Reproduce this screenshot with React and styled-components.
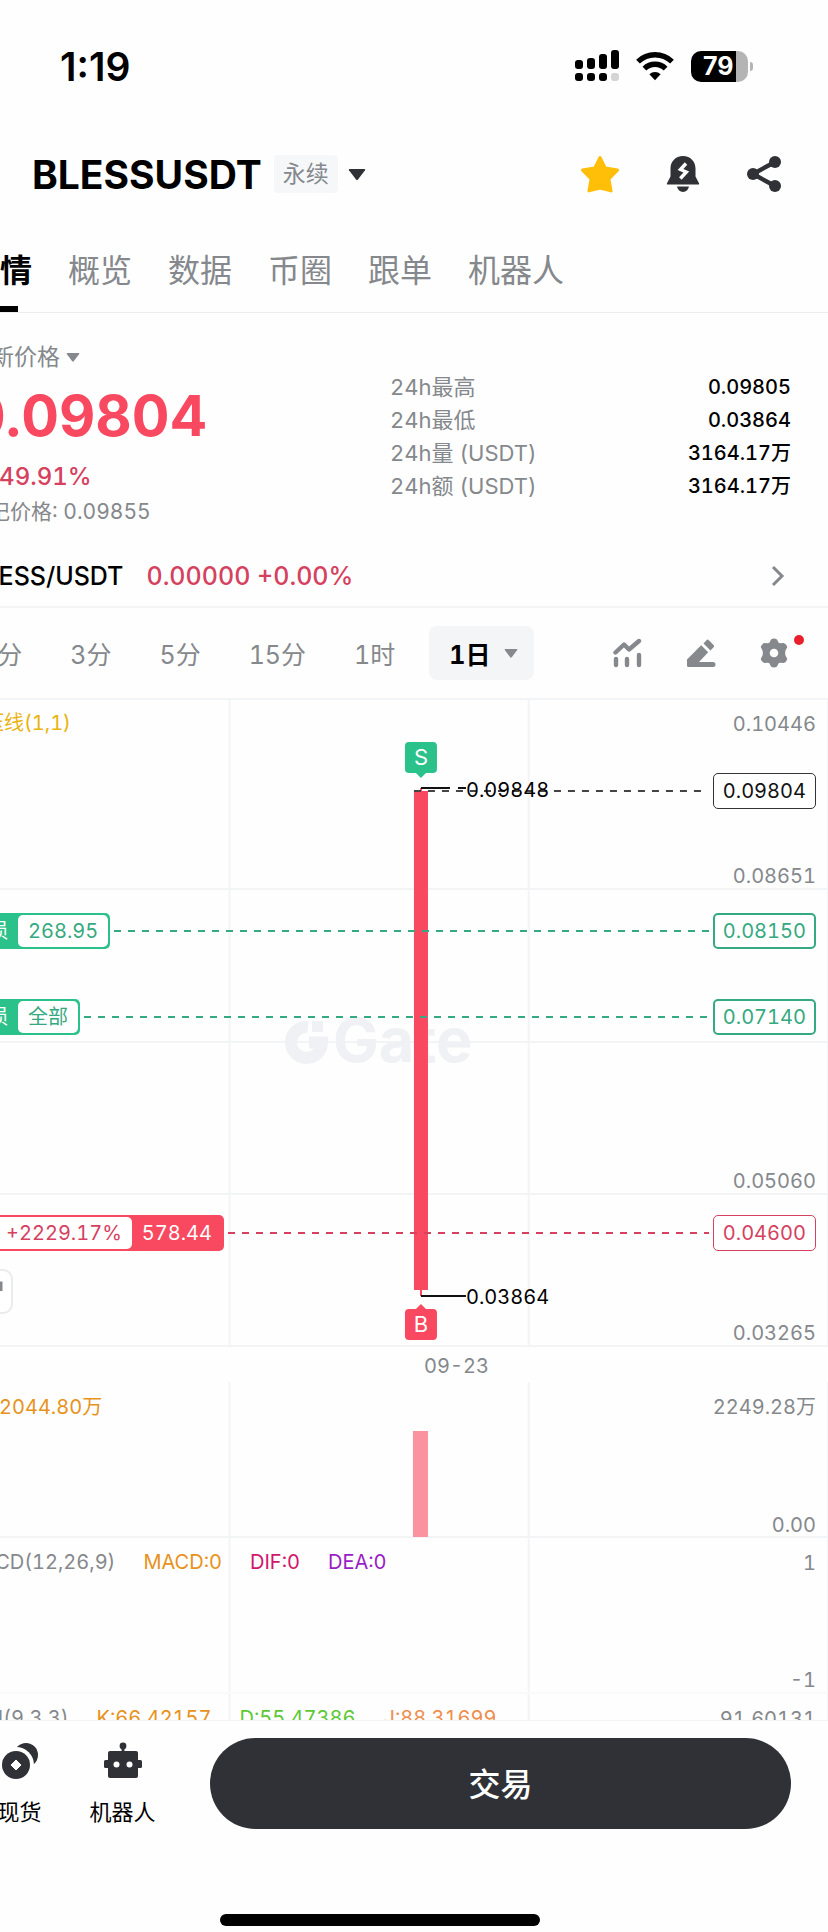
import { useState } from "react"
import styled, { createGlobalStyle } from "styled-components"

const UP = "#f84960"
const DOWN = "#2ac28a"
const DOWN_LINE = "#35a981"
const UP_LINE = "#d5415f"
const INK = "#303136"
const MUTED = "#85888c"
const LINE = "#f3f4f5"

const tabs = ["行情", "概览", "数据", "币圈", "跟单", "机器人"]

const stats = [
  { label: "24h最高", value: "0.09805" },
  { label: "24h最低", value: "0.03864" },
  { label: "24h量 (USDT)", value: "3164.17万" },
  { label: "24h额 (USDT)", value: "3164.17万" },
]

const intervals = ["1分", "3分", "5分", "15分", "1时"]

// Y positions are measured from the top of the pane.
const priceTicks = [
  { y: 26, text: "0.10446" },
  { y: 178, text: "0.08651" },
  { y: 483, text: "0.05060" },
  { y: 635, text: "0.03265" },
]

const macdLegend = [
  { text: "MACD(12,26,9)", color: MUTED },
  { text: "MACD:0", color: "#e8921c" },
  { text: "DIF:0", color: "#d2156c" },
  { text: "DEA:0", color: "#9a1cc6" },
]

const kdjLegend = [
  { text: "KDJ(9,3,3)", color: MUTED },
  { text: "K:66.42157", color: "#e8921c" },
  { text: "D:55.47386", color: "#5bc934" },
  { text: "J:88.31699", color: "#ee8e4e" },
]

function SignalIcon() {
  return (
    <svg width="44" height="32" viewBox="0 0 44 32" aria-hidden="true">
      <rect x="0" y="10" width="8" height="9" rx="3" />
      <rect x="12" y="8" width="8" height="11" rx="3" />
      <rect x="24" y="4" width="8" height="15" rx="3" />
      <rect x="36" y="0" width="8" height="19" rx="3" />
      <rect x="0" y="23" width="8" height="8" rx="3" />
      <rect x="12" y="23" width="8" height="8" rx="3" />
      <rect x="24" y="23" width="8" height="8" rx="3" />
      <rect x="36" y="23" width="8" height="8" rx="3" fill="#d4d4d4" />
    </svg>
  )
}

function WifiIcon() {
  return (
    <svg width="38" height="30" viewBox="0 0 38 30" fill="none" stroke="#000" strokeWidth="5.4" aria-hidden="true">
      <path d="M2 10.6a24.5 24.5 0 0 1 34 0" />
      <path d="M8.4 17.6a15.2 15.2 0 0 1 21.2 0" />
      <path d="M19 29.2l-5.6-6a8 8 0 0 1 11.2 0z" fill="#000" stroke="none" />
    </svg>
  )
}

function StarIcon() {
  return (
    <svg width="40" height="38" viewBox="0 0 40 38" aria-hidden="true">
      <path
        d="M20 2.500l5.300 10.600 12.200 2-8.600 8.800 2.200 12L20 33l-11.100 2.900 2.200-12-8.600-8.800 12.200-2z"
        fill="#ffbe08"
        stroke="#ffbe08"
        strokeWidth="3"
        strokeLinejoin="round"
      />
    </svg>
  )
}

function BellIcon() {
  return (
    <svg width="34" height="38" viewBox="0 0 34 38" fill={INK} aria-hidden="true">
      <path d="M17 1C9.600 1 4.500 6.500 4.500 13.500v8L1 28.200c-.4.8 0 1.300.8 1.300h30.400c.8 0 1.200-.5.8-1.300l-3.500-6.700v-8C29.500 6.500 24.400 1 17 1z" />
      <path d="M11 31.500h12c-.7 3.400-3 5.500-6 5.500s-5.300-2.100-6-5.500z" />
      <path d="M20 8.500l-5.500 6 5.800 2.500-6 6.500" fill="none" stroke="#fff" strokeWidth="3.400" />
    </svg>
  )
}

function ShareIcon() {
  return (
    <svg width="36" height="38" viewBox="0 0 36 38" fill={INK} aria-hidden="true">
      <path d="M29 7L7 19l22 12" fill="none" stroke={INK} strokeWidth="4.400" />
      <circle cx="29" cy="7" r="6" />
      <circle cx="7" cy="19" r="6" />
      <circle cx="29" cy="31" r="6" />
    </svg>
  )
}

function IndicatorIcon() {
  return (
    <svg width="30" height="30" viewBox="0 0 30 30" fill="none" stroke={MUTED} strokeWidth="4.400" strokeLinecap="round" strokeLinejoin="round" aria-hidden="true">
      <path d="M3.500 14.500L12 6.500l5 5L27 3" />
      <path d="M4 21v6M15 21v6M27 17v10" />
    </svg>
  )
}

function PenIcon() {
  return (
    <svg width="30" height="30" viewBox="0 0 30 30" fill={MUTED} aria-hidden="true">
      <path d="M15.200 7.200l7 7L13 24h14a2.200 2.200 0 0 1 0 5H2.500A1.500 1.500 0 0 1 1 27.500V21.500z" />
      <path d="M20.500 2.200a1.600 1.600 0 0 1 2.300 0l4.800 4.800a1.600 1.600 0 0 1 0 2.300l-3.100 3.100-7-7z" />
    </svg>
  )
}

function GearIcon() {
  return (
    <svg width="28" height="30" viewBox="0 0 28 30" aria-hidden="true">
      <path
        fillRule="evenodd"
        fill={MUTED}
        d="M11 1.500q3-2 6 0l1.500 3q.8 1 2 .8l3.200-.2q2.800.8 3.600 3.900L25.500 12.500q-.7 2.500 0 5l1.800 3.500q-.8 3.100-3.600 3.900l-3.200-.2q-1.200-.2-2 .8l-1.500 3q-3 2-6 0l-1.500-3q-.8-1-2-.8l-3.200.2Q1.500 24.100.7 21l1.800-3.500q.7-2.500 0-5L.7 9q.8-3.100 3.600-3.900l3.200.2q1.200.2 2-.8zM14 10.700a4.300 4.300 0 1 0 0 8.600 4.300 4.300 0 0 0 0-8.600z"
      />
    </svg>
  )
}

function CoinsIcon() {
  return (
    <svg width="38" height="38" viewBox="0 0 38 38" aria-hidden="true">
      <circle cx="25" cy="13" r="12" fill={INK} />
      <circle cx="15" cy="23" r="18" fill="#fff" />
      <circle cx="15" cy="23" r="14" fill={INK} />
      <path d="M15 18l5 5-5 5-5-5z" fill="#fff" stroke="#fff" strokeLinejoin="round" />
    </svg>
  )
}

function RobotIcon() {
  return (
    <svg width="38" height="38" viewBox="0 0 38 38" fill={INK} aria-hidden="true">
      <circle cx="19" cy="4" r="3.400" />
      <path d="M17.600 4h2.800v6h-2.800z" />
      <rect x="4" y="9" width="30" height="27" rx="2" />
      <rect x="0" y="18" width="38" height="8" rx="1.500" />
      <circle cx="12.500" cy="22.500" r="3" fill="#fff" />
      <circle cx="25.500" cy="22.500" r="3" fill="#fff" />
    </svg>
  )
}

function Caret({ size, color }) {
  return (
    <svg width={size} height={size} viewBox="0 0 18 18" aria-hidden="true">
      <path d="M1.500 4h15q1 .5.500 1.300L10 14.500q-1 1-2 0L1 5.300Q.6 4.500 1.500 4z" fill={color} />
    </svg>
  )
}

function VerticalGrid() {
  return (
    <g stroke={LINE} strokeWidth="2">
      <line x1="30.4%" x2="30.4%" y1="0" y2="100%" />
      <line x1="65.2%" x2="65.2%" y1="0" y2="100%" />
      <line x1="100%" x2="100%" y1="0" y2="100%" />
    </g>
  )
}

function PriceChart() {
  return (
    <Pane $height={649}>
      <Plot>
        <VerticalGrid />
        <g stroke={LINE} strokeWidth="2">
          <line x1="0" x2="100%" y1="1" y2="1" />
          <line x1="0" x2="100%" y1="191" y2="191" />
          <line x1="0" x2="100%" y1="344" y2="344" />
          <line x1="0" x2="100%" y1="496" y2="496" />
          <line x1="0" x2="100%" y1="648" y2="648" />
        </g>
        <svg x="52.67%" overflow="visible">
          <path d="M-113 329a15.500 15.500 0 1 0 14 15.500h-13" fill="none" stroke="#f0f1f4" strokeWidth="12" />
          <path d="M-109 323h11v11h-11z" fill="#f0f1f4" />
          <text x="-88" y="364" fontSize="61" fontWeight="700" fill="#f0f1f4">Gate</text>
          <rect x="-7" y="93" width="14" height="499" fill={UP} />
          <path d="M0 90v4M0 591v7" stroke={UP} strokeWidth="2" />
          <path d="M0 90h29M37 90h8" stroke="#111" strokeWidth="2" />
          <path d="M0 598h45" stroke="#111" strokeWidth="2" />
          <path d="M-7 93h294" stroke="#444" strokeWidth="2" strokeDasharray="7 7" />
          <text x="45" y="99" fontSize="20" fill="#000">0.09848</text>
          <text x="45" y="606" fontSize="20" fill="#000">0.03864</text>
          <path d="M-12 44h24q4 0 4 4v23q0 4-4 4H5l-5 5-5-5h-7q-4 0-4-4V48q0-4 4-4z" fill={DOWN} />
          <text x="0" y="67" fontSize="22" textAnchor="middle" fill="#fff">S</text>
          <path d="M-12 611h7l5-5 5 5h7q4 0 4 4v23q0 4-4 4h-24q-4 0-4-4v-23q0-4 4-4z" fill={UP} />
          <text x="0" y="634" fontSize="22" textAnchor="middle" fill="#fff">B</text>
        </svg>
      </Plot>
      <Legend $y={25}>
        <LegendItem $color="#eab30f">支压线(1,1)</LegendItem>
      </Legend>
      {priceTicks.map(tick => (
        <Tick key={tick.text} $y={tick.y}>{tick.text}</Tick>
      ))}
      <Level $y={93}>
        <PriceTag $color="#333" $text="#111" $thin>0.09804</PriceTag>
      </Level>
      <Level $y={233}>
        <OrderTag $fill={DOWN}>
          <OrderName>止损</OrderName>
          <OrderAmount $color={DOWN_LINE}>268.95</OrderAmount>
        </OrderTag>
        <Dash $color={DOWN_LINE} />
        <PriceTag $color={DOWN_LINE}>0.08150</PriceTag>
      </Level>
      <Level $y={319}>
        <OrderTag $fill={DOWN}>
          <OrderName>止损</OrderName>
          <OrderAmount $color={DOWN_LINE}>全部</OrderAmount>
        </OrderTag>
        <Dash $color={DOWN_LINE} />
        <PriceTag $color={DOWN_LINE}>0.07140</PriceTag>
      </Level>
      <Level $y={535}>
        <OrderTag $fill={UP}>
          <Profit>+2229.17%</Profit>
          <OrderName>578.44</OrderName>
        </OrderTag>
        <Dash $color={UP_LINE} />
        <PriceTag $color={UP_LINE} $thin>0.04600</PriceTag>
      </Level>
      <ExpandButton type="button" aria-label="全屏">
        <svg width="24" height="24" viewBox="0 0 24 24" fill="none" stroke={MUTED} strokeWidth="3" aria-hidden="true">
          <path d="M14 3h8v8M10 21H2v-8" />
        </svg>
      </ExpandButton>
    </Pane>
  )
}

function App() {
  const [activeTab, setActiveTab] = useState(tabs[0])
  const [favorite, setFavorite] = useState(true)

  return (
    <>
      <GlobalStyle />
      <Page>
        <StatusBar>
          <Clock>1:19</Clock>
          <StatusIcons>
            <SignalIcon />
            <WifiIcon />
            <Battery>79</Battery>
          </StatusIcons>
        </StatusBar>
        <Header>
          <Title>BLESSUSDT</Title>
          <Badge>永续</Badge>
          <IconButton type="button" aria-label="切换合约">
            <Caret size={18} color={INK} />
          </IconButton>
          <HeaderActions>
            <IconButton type="button" aria-label="收藏" aria-pressed={favorite} onClick={() => setFavorite(!favorite)}>
              <StarIcon />
            </IconButton>
            <IconButton type="button" aria-label="提醒">
              <BellIcon />
            </IconButton>
            <IconButton type="button" aria-label="分享">
              <ShareIcon />
            </IconButton>
          </HeaderActions>
        </Header>
        <Content>
          <Tabs>
            {tabs.map(tab => (
              <Tab key={tab} type="button" $active={tab === activeTab} onClick={() => setActiveTab(tab)}>
                {tab}
              </Tab>
            ))}
          </Tabs>
          <Summary>
            <div>
              <PriceLabel type="button">
                最新价格
                <Caret size={14} color={MUTED} />
              </PriceLabel>
              <Price>0.09804</Price>
              <Change>+149.91%</Change>
              <MarkPrice>标记价格: 0.09855</MarkPrice>
            </div>
            <Stats>
              {stats.map(stat => (
                <Stat key={stat.label}>
                  <dt>{stat.label}</dt>
                  <dd>{stat.value}</dd>
                </Stat>
              ))}
            </Stats>
          </Summary>
          <SpotLink href="#spot">
            <span>BLESS/USDT</span>
            <SpotPrice>0.00000 +0.00%</SpotPrice>
            <svg width="14" height="22" viewBox="0 0 14 22" fill="none" stroke={MUTED} strokeWidth="3" aria-hidden="true">
              <path d="M2 2l9 9-9 9" />
            </svg>
          </SpotLink>
          <Toolbar>
            <Intervals>
              {intervals.map(interval => (
                <Interval key={interval} type="button">{interval}</Interval>
              ))}
            </Intervals>
            <ActiveInterval type="button">
              1日
              <Caret size={14} color={MUTED} />
            </ActiveInterval>
            <Tools>
              <IconButton type="button" aria-label="指标">
                <IndicatorIcon />
              </IconButton>
              <IconButton type="button" aria-label="画线">
                <PenIcon />
              </IconButton>
              <IconButton type="button" aria-label="设置">
                <GearIcon />
                <Dot />
              </IconButton>
            </Tools>
          </Toolbar>
          <PriceChart />
          <DateAxis>09-23</DateAxis>
          <Pane $height={156}>
            <Plot>
              <VerticalGrid />
              <line x1="0" x2="100%" y1="155" y2="155" stroke={LINE} strokeWidth="2" />
              <svg x="52.67%" overflow="visible">
                <rect x="-8" y="49" width="15" height="106" fill="#fb929f" />
              </svg>
            </Plot>
            <Legend $y={25}>
              <LegendItem $color="#e8921c">Vol:2044.80万</LegendItem>
            </Legend>
            <Tick $y={25}>2249.28万</Tick>
            <Tick $y={143}>0.00</Tick>
          </Pane>
          <Pane $height={156}>
            <Plot>
              <VerticalGrid />
              <line x1="0" x2="100%" y1="155" y2="155" stroke="#fafafa" strokeWidth="2" />
            </Plot>
            <Legend $y={24}>
              {macdLegend.map(item => (
                <LegendItem key={item.text} $color={item.color}>{item.text}</LegendItem>
              ))}
            </Legend>
            <Tick $y={25}>1</Tick>
            <Tick $y={142}>-1</Tick>
          </Pane>
          <Pane $height={26}>
            <Plot>
              <VerticalGrid />
            </Plot>
            <Legend $y={24}>
              {kdjLegend.map(item => (
                <LegendItem key={item.text} $color={item.color}>{item.text}</LegendItem>
              ))}
            </Legend>
            <Tick $y={25}>91.60131</Tick>
          </Pane>
          <Footer>
            <NavLink href="#spot">
              <CoinsIcon />
              现货
            </NavLink>
            <NavLink href="#bot">
              <RobotIcon />
              机器人
            </NavLink>
            <TradeButton type="button">交易</TradeButton>
          </Footer>
        </Content>
        <HomeIndicator />
      </Page>
    </>
  )
}

const GlobalStyle = createGlobalStyle`
  * {
    box-sizing: border-box;
  }

  body {
    margin: 0;
    background: #fefefe;
    color: #000;
    font-family: Inter, "Noto Sans CJK SC", sans-serif;
    font-size: 22px;
  }

  button {
    padding: 0;
    border: 0;
    background: none;
    color: inherit;
    font: inherit;
    cursor: pointer;
  }

  a {
    color: inherit;
    text-decoration: none;
  }

  svg {
    display: block;
    flex: none;
  }
`

const Page = styled.div`
  overflow-x: clip;
`

const StatusBar = styled.div`
  display: flex;
  align-items: center;
  justify-content: space-between;
  height: 132px;
  padding: 0 80px 0 60px;
`

const Clock = styled.div`
  font-size: 39px;
  font-weight: 600;
`

const StatusIcons = styled.div`
  display: flex;
  align-items: center;
  gap: 17px;
`

const Battery = styled.div`
  position: relative;
  width: 57px;
  height: 31px;
  padding-left: 12px;
  border-radius: 10px;
  background: linear-gradient(90deg, #000 45px, #b4b4b4 45px);
  color: #fff;
  font-size: 25px;
  font-weight: 700;
  line-height: 31px;

  &:after {
    position: absolute;
    top: 11px;
    right: -5px;
    width: 3px;
    height: 9px;
    border-radius: 0 3px 3px 0;
    background: #b4b4b4;
    content: "";
  }
`

const Header = styled.header`
  display: flex;
  align-items: center;
  height: 84px;
  padding: 0 46px 0 32px;
`

const Title = styled.h1`
  margin: 0 12px 0 0;
  font-size: 39px;
  font-weight: 700;
`

const Badge = styled.span`
  margin-right: 10px;
  padding: 0 9px;
  border-radius: 4px;
  background: #f6f7f9;
  color: ${MUTED};
  font-size: 23px;
  line-height: 38px;
`

const HeaderActions = styled.div`
  display: flex;
  gap: 46px;
  margin-left: auto;
`

const IconButton = styled.button`
  position: relative;
`

const Dot = styled.span`
  position: absolute;
  top: -3px;
  right: -16px;
  width: 10px;
  height: 10px;
  border-radius: 50%;
  background: #e8202c;
`

// The scrolled content runs off the left edge of the screen.
const Content = styled.main`
  margin-left: -32px;
  font-variant-numeric: tabular-nums;
`

const Tabs = styled.nav`
  display: flex;
  gap: 36px;
  height: 97px;
  border-bottom: 1px solid #ececee;
`

const Tab = styled.button`
  position: relative;
  padding-top: 8px;
  color: ${props => props.$active ? "#000" : MUTED};
  font-size: 32px;
  font-weight: ${props => props.$active ? 700 : 400};

  &:after {
    position: absolute;
    bottom: 0;
    left: calc(50% - 18px);
    display: ${props => props.$active ? "block" : "none"};
    width: 36px;
    height: 6px;
    background: #000;
    content: "";
  }
`

const Summary = styled.section`
  display: grid;
  grid-template-columns: 422px 1fr;
  padding: 30px 37px 15px 0;
`

const PriceLabel = styled.button`
  display: flex;
  align-items: center;
  gap: 6px;
  color: ${MUTED};
  font-size: 23px;
  line-height: 28px;
`

const Price = styled.div`
  color: ${UP};
  font-size: 56px;
  font-variant-numeric: normal;
  font-weight: 700;
  line-height: 90px;
`

const Change = styled.div`
  color: ${UP_LINE};
  font-size: 24px;
  font-weight: 500;
  line-height: 32px;
`

const MarkPrice = styled.div`
  color: ${MUTED};
  font-size: 21px;
  line-height: 38px;
`

const Stats = styled.dl`
  margin: 28px 0 0;
`

const Stat = styled.div`
  display: flex;
  justify-content: space-between;
  line-height: 33px;

  dt {
    color: ${MUTED};
  }

  dd {
    margin: 0;
    font-size: 20px;
    font-weight: 500;
  }
`

const SpotLink = styled.a`
  display: flex;
  align-items: center;
  gap: 23px;
  height: 62px;
  padding-right: 43px;
  border-bottom: 2px solid ${LINE};
  font-size: 25px;
  font-weight: 500;

  svg {
    margin-left: auto;
  }
`

const SpotPrice = styled.span`
  color: ${UP_LINE};
`

const Toolbar = styled.div`
  display: flex;
  align-items: center;
  height: 90px;
  padding: 0 40px 0 13px;
`

const Intervals = styled.div`
  display: flex;
  gap: 48px;
`

const Interval = styled.button`
  color: ${MUTED};
  font-size: 25px;
`

const ActiveInterval = styled.button`
  display: flex;
  align-items: center;
  gap: 14px;
  height: 54px;
  margin-left: 34px;
  padding: 0 16px 0 20px;
  border-radius: 8px;
  background: #f3f5f7;
  font-size: 25px;
  font-weight: 700;
`

const Tools = styled.div`
  display: flex;
  gap: 44px;
  margin-left: auto;
`

const Pane = styled.section`
  position: relative;
  height: ${props => props.$height}px;
  overflow: hidden;
  font-size: 20px;
`

const Plot = styled.svg`
  width: 100%;
  height: 100%;
`

const Legend = styled.div`
  position: absolute;
  top: ${props => props.$y - 15}px;
  left: -4px;
  display: flex;
  gap: 28px;
  line-height: 31px;
`

const LegendItem = styled.span`
  color: ${props => props.$color};
`

const Tick = styled.span`
  position: absolute;
  top: ${props => props.$y - 15}px;
  right: 12px;
  color: ${MUTED};
  line-height: 31px;
`

const Level = styled.div`
  position: absolute;
  top: ${props => props.$y - 18}px;
  right: 12px;
  left: -12px;
  display: flex;
  align-items: center;
  justify-content: flex-end;
  height: 36px;
`

const PriceTag = styled.span`
  padding: ${props => props.$thin ? "1px 9px" : "0 8px"};
  border: ${props => props.$thin ? 1 : 2}px solid ${props => props.$color};
  border-radius: 5px;
  background: #fff;
  color: ${props => props.$text || props.$color};
  line-height: 32px;
`

const OrderTag = styled.span`
  display: flex;
  height: 36px;
  padding: 2px;
  border-radius: 5px;
  background: ${props => props.$fill};
  line-height: 32px;
`

const OrderName = styled.span`
  padding: 0 10px;
  color: #fff;
`

const OrderAmount = styled.span`
  padding: 0 10px;
  border-radius: 5px;
  background: #fff;
  color: ${props => props.$color};
`

const Profit = styled.span`
  padding: 0 10px 0 48px;
  border-radius: 5px;
  background: #fff;
  color: ${UP_LINE};
`

const Dash = styled.span`
  flex: 1;
  height: 2px;
  margin: 0 4px;
  background: repeating-linear-gradient(90deg, ${props => props.$color} 0 7px, transparent 7px 14px);
`

const ExpandButton = styled.button`
  position: absolute;
  top: 571px;
  left: 0;
  width: 45px;
  height: 45px;
  padding-left: 9px;
  border: 2px solid #e9ebed;
  border-radius: 10px;
  background: #fff;
`

const DateAxis = styled.div`
  height: 35px;
  padding-left: 456px;
  color: ${MUTED};
  font-size: 20px;
  line-height: 38px;
`

const Footer = styled.footer`
  display: flex;
  align-items: flex-start;
  padding: 17px 37px 0 0;
  border-top: 1px solid ${LINE};
`

const NavLink = styled.a`
  display: flex;
  flex-direction: column;
  align-items: center;
  gap: 14px;
  width: 103px;
  padding-top: 4px;
`

const TradeButton = styled.button`
  flex: 1;
  height: 91px;
  margin-left: 36px;
  padding-bottom: 4px;
  border-radius: 46px;
  background: ${INK};
  color: #fff;
  font-size: 32px;
  font-weight: 500;
`

const HomeIndicator = styled.div`
  width: 320px;
  height: 12px;
  margin: 85px auto 6px;
  border-radius: 6px;
  background: #000;
  transform: translateX(-34px);
`

export default App
